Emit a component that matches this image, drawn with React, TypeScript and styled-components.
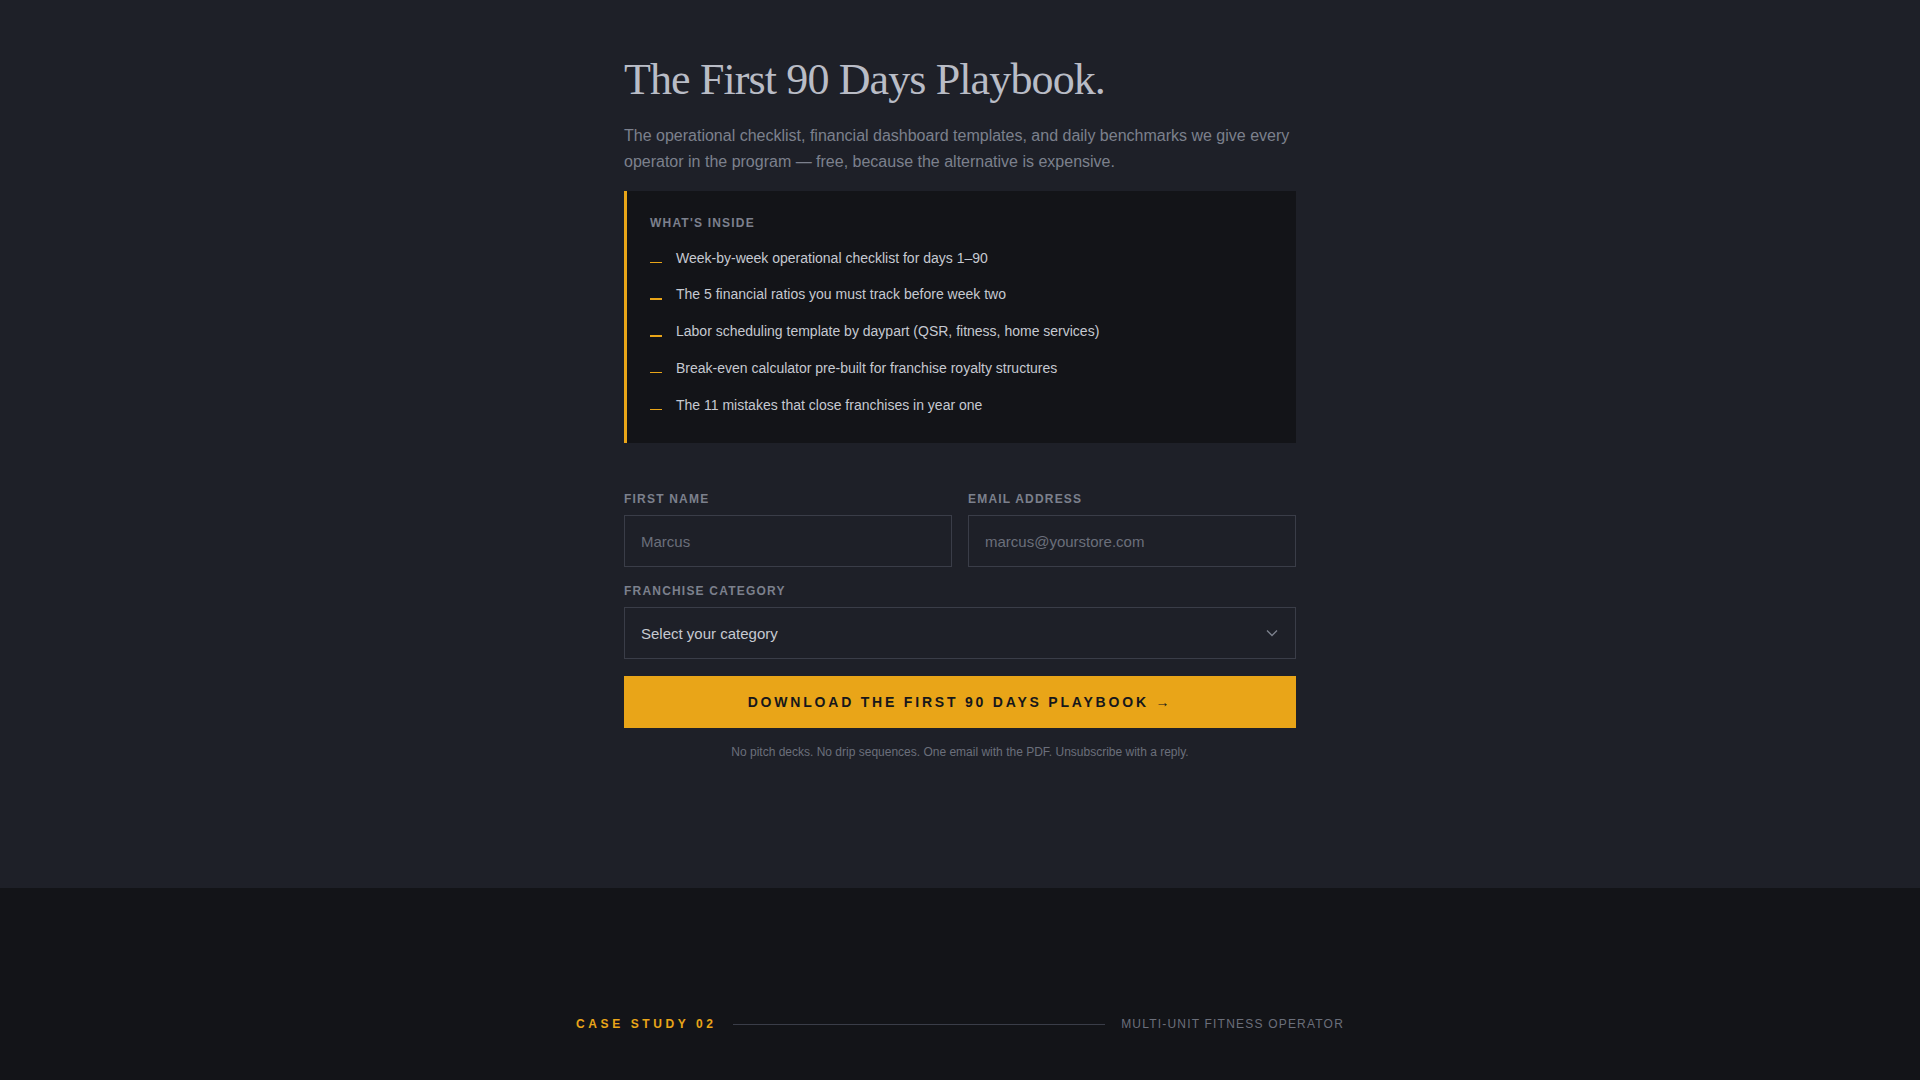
import React from 'react';
import styled, { createGlobalStyle } from 'styled-components';

const GlobalStyle = createGlobalStyle`
  * { box-sizing: border-box; }
  html, body {
    margin: 0;
    padding: 0;
    background: #1e2028;
    font-family: 'Liberation Sans', Arial, sans-serif;
  }
`;

const amber = '#e9a518';

const Hero = styled.section`
  background: #1e2028;
  padding: 56px 0 128px;
`;

const Column = styled.div`
  width: 672px;
  margin: 0 auto;
`;

const Title = styled.h1`
  margin: 0;
  font-family: 'Liberation Serif', 'Times New Roman', serif;
  font-weight: 400;
  font-size: 44px;
  line-height: 1.1;
  letter-spacing: -0.02em;
  color: #b9bcc6;
`;

const Lead = styled.p`
  margin: 19px 0 0;
  font-size: 16px;
  line-height: 1.6;
  color: #7c808d;
`;

const InsideBox = styled.div`
  margin-top: 16px;
  background: #131418;
  border-left: 3px solid ${amber};
  padding: 24px 24px 27px 23px;
`;

const SmallLabel = styled.div`
  font-size: 12px;
  line-height: 16px;
  font-weight: 700;
  letter-spacing: 0.1em;
  text-transform: uppercase;
  color: #7c808d;
`;

const List = styled.ul`
  list-style: none;
  margin: 16px 0 0;
  padding: 0;
  display: flex;
  flex-direction: column;
  gap: 14.4px;
`;

const Item = styled.li`
  display: flex;
  align-items: flex-start;
  gap: 14px;
  font-size: 14px;
  line-height: 22.4px;
  color: #c6c9d1;
`;

const Dash = styled.span`
  flex: none;
  width: 12px;
  height: 1.5px;
  margin-top: 15px;
  background: ${amber};
`;

const Form = styled.form`
  margin-top: 48px;
  display: flex;
  flex-direction: column;
  gap: 16px;
`;

const Row = styled.div`
  display: grid;
  grid-template-columns: 1fr 1fr;
  gap: 16px;
`;

const Field = styled.label`
  display: flex;
  flex-direction: column;
  gap: 8px;
`;

const Input = styled.input`
  height: 52px;
  width: 100%;
  padding: 0 16px;
  background: #1e2028;
  border: 1px solid #3a3d48;
  border-radius: 0;
  font-family: 'Liberation Sans', Arial, sans-serif;
  font-size: 15px;
  color: #c6c9d1;
  outline: none;

  &::placeholder {
    color: #6b6f7b;
  }
`;

const SelectBox = styled.div`
  height: 52px;
  padding: 0 17px 0 16px;
  display: flex;
  align-items: center;
  justify-content: space-between;
  border: 1px solid #3a3d48;
  font-size: 15px;
  color: #c6c9d1;
`;

const SubmitButton = styled.button`
  height: 52px;
  width: 100%;
  margin-top: 1px;
  border: none;
  border-radius: 0;
  background: ${amber};
  color: #16171b;
  font-family: 'Liberation Sans', Arial, sans-serif;
  font-weight: 700;
  font-size: 14px;
  letter-spacing: 0.2em;
  text-transform: uppercase;
  cursor: pointer;
`;

const FinePrint = styled.p`
  margin: 0;
  text-align: center;
  font-size: 12px;
  line-height: 16px;
  color: #6b6f7b;
`;

const DarkSection = styled.section`
  background: #131418;
  padding: 128px 0 120px;
`;

const CaseRow = styled.div`
  width: 768px;
  margin: 0 auto;
  display: flex;
  align-items: center;
  gap: 16px;
  line-height: 16px;
`;

const CaseTag = styled.span`
  font-size: 12px;
  font-weight: 700;
  letter-spacing: 0.3em;
  color: ${amber};
`;

const Rule = styled.span`
  flex: 1;
  height: 1px;
  background: #3a3d48;
`;

const CaseMeta = styled.span`
  font-size: 12px;
  letter-spacing: 0.1em;
  color: #6b6f7b;
`;

const items = [
  'Week-by-week operational checklist for days 1–90',
  'The 5 financial ratios you must track before week two',
  'Labor scheduling template by daypart (QSR, fitness, home services)',
  'Break-even calculator pre-built for franchise royalty structures',
  'The 11 mistakes that close franchises in year one',
];

const Chevron = () => (
  <svg width="12" height="8" viewBox="0 0 12 8" fill="none">
    <path d="M1 1.5 6 6.5 11 1.5" stroke="#7c808d" strokeWidth="1.3" />
  </svg>
);

export default function App() {
  return (
    <>
      <GlobalStyle />
      <Hero>
        <Column>
          <Title>The First 90 Days Playbook.</Title>
          <Lead>
            The operational checklist, financial dashboard templates, and daily benchmarks we give every
            operator in the program — free, because the alternative is expensive.
          </Lead>

          <InsideBox>
            <SmallLabel>What's inside</SmallLabel>
            <List>
              {items.map((text) => (
                <Item key={text}>
                  <Dash />
                  <span>{text}</span>
                </Item>
              ))}
            </List>
          </InsideBox>

          <Form onSubmit={(e) => e.preventDefault()}>
            <Row>
              <Field>
                <SmallLabel>First name</SmallLabel>
                <Input placeholder="Marcus" />
              </Field>
              <Field>
                <SmallLabel>Email address</SmallLabel>
                <Input placeholder="marcus@yourstore.com" />
              </Field>
            </Row>
            <Field>
              <SmallLabel>Franchise category</SmallLabel>
              <SelectBox>
                <span>Select your category</span>
                <Chevron />
              </SelectBox>
            </Field>
            <SubmitButton type="submit">Download the First 90 Days Playbook →</SubmitButton>
            <FinePrint>
              No pitch decks. No drip sequences. One email with the PDF. Unsubscribe with a reply.
            </FinePrint>
          </Form>
        </Column>
      </Hero>

      <DarkSection>
        <CaseRow>
          <CaseTag>CASE STUDY 02</CaseTag>
          <Rule />
          <CaseMeta>MULTI-UNIT FITNESS OPERATOR</CaseMeta>
        </CaseRow>
      </DarkSection>
    </>
  );
}
